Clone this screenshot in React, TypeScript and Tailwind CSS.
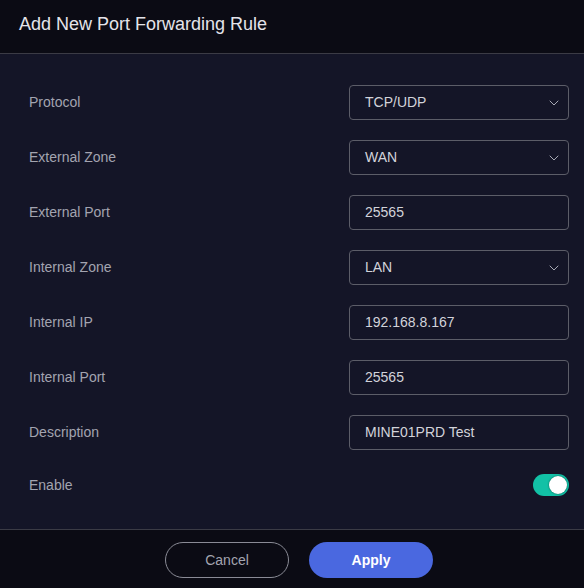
import { ChevronDown } from "lucide-react";

type Row = { label: string; value: string; select?: boolean };

const rows: Row[] = [
  { label: "Protocol", value: "TCP/UDP", select: true },
  { label: "External Zone", value: "WAN", select: true },
  { label: "External Port", value: "25565" },
  { label: "Internal Zone", value: "LAN", select: true },
  { label: "Internal IP", value: "192.168.8.167" },
  { label: "Internal Port", value: "25565" },
  { label: "Description", value: "MINE01PRD Test" },
];

export default function App() {
  return (
    <div className="w-[584px] h-[588px] flex flex-col bg-[#141527] font-['Liberation_Sans',Arial,sans-serif]">
      <header className="h-[54px] shrink-0 flex items-center px-[19px] bg-[#0b0b14] border-b border-[#3b3b45]">
        <h1 className="text-[18px] text-[#e4e4ea] pb-[4px]">Add New Port Forwarding Rule</h1>
      </header>
      <main className="flex-1 flex flex-col gap-[20px] pt-[31px] pl-[29px] pr-[15px]">
        {rows.map((r) => (
          <div key={r.label} className="flex items-center justify-between h-[35px]">
            <span className="text-[14px] text-[#a3a4b0]">{r.label}</span>
            <div className="w-[220px] h-[35px] flex items-center justify-between pl-[15px] pr-[6px] border border-[#5c5d68] rounded-[4px]">
              <span className="text-[14px] text-[#d2d3da]">{r.value}</span>
              {r.select && <ChevronDown size={16} strokeWidth={1.4} className="text-[#b4b5c0]" />}
            </div>
          </div>
        ))}
        <div className="flex items-center justify-between h-[30px]">
          <span className="text-[14px] text-[#a3a4b0]">Enable</span>
          <div className="w-[36px] h-[22px] rounded-full bg-[#12c1a6] flex items-center justify-end pr-[2px]">
            <div className="w-[18px] h-[18px] rounded-full bg-white shadow-[0_0_2px_rgba(0,0,0,0.6)]" />
          </div>
        </div>
      </main>
      <footer className="h-[59px] shrink-0 flex items-center justify-center gap-[20px] pl-[14px] bg-[#0b0b14] border-t border-[#3b3b45] pt-[2px]">
        <button className="w-[124px] h-[36px] rounded-full border border-[#8a8b96] text-[14px] text-[#a3a4b0]">
          Cancel
        </button>
        <button className="w-[124px] h-[36px] rounded-full bg-[#4a68e0] text-[14px] font-bold text-white">
          Apply
        </button>
      </footer>
    </div>
  );
}
